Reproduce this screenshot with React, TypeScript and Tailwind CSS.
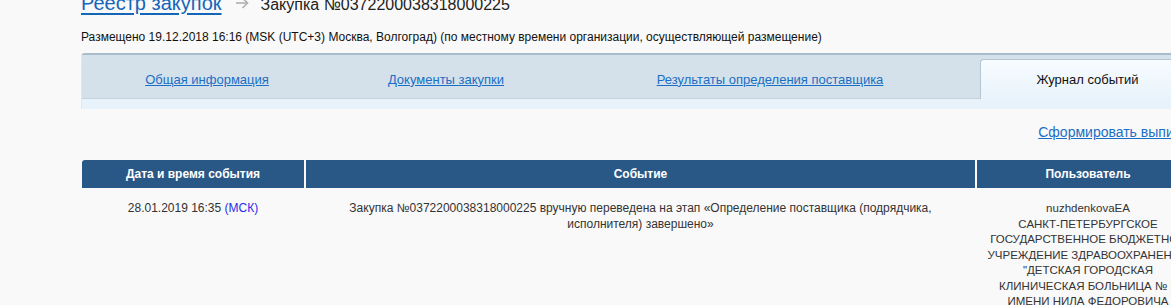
import React from "react";

const userLines = [
  "nuzhdenkovaEA",
  "САНКТ-ПЕТЕРБУРГСКОЕ",
  "ГОСУДАРСТВЕННОЕ БЮДЖЕТНОЕ",
  "УЧРЕЖДЕНИЕ ЗДРАВООХРАНЕНИЯ",
  "\"ДЕТСКАЯ ГОРОДСКАЯ",
  "КЛИНИЧЕСКАЯ БОЛЬНИЦА № 5",
  "ИМЕНИ НИЛА ФЕДОРОВИЧА",
  "ФИЛАТОВА\"",
];

export default function App() {
  return (
    <div className="w-[1171px] h-[305px] overflow-hidden bg-[#f9f9f9] text-[#333] font-['Liberation_Sans',Arial,sans-serif]">
      <div className="w-[1120px] ml-[81px]">
        {/* breadcrumb */}
        <div className="flex items-baseline h-[20px] -mt-[7px] leading-[20px] whitespace-nowrap">
          <a href="#" className="text-[20px] text-[#1466b8] underline underline-offset-[3px]">Реестр закупок</a>
          <svg width="14" height="12" viewBox="0 0 14 12" className="ml-[13px] mr-[12px] self-start mt-[4px]" fill="none" stroke="#b0b0b0" strokeWidth="1.6">
            <path d="M1 6 H12.5" />
            <path d="M7.5 1 L12.5 6 L7.5 11" />
          </svg>
          <span className="text-[16px] text-[#222]">Закупка №0372200038318000225</span>
        </div>
        <div className="mt-[17px] text-[12px] leading-[14px] text-[#111] whitespace-nowrap">
          Размещено 19.12.2018 16:16 (MSK (UTC+3) Москва, Волгоград) (по местному времени организации, осуществляющей размещение)
        </div>

        {/* tabs */}
        <div className="mt-[9px] rounded-tl-[4px] border-t-2 border-l border-t-[#a9bccb] border-l-[#dfe8ef] overflow-hidden">
          <div className="flex h-[44px] items-end bg-[#d5e1ea] border-b border-[#c4d3de]">
            <div className="w-[250px] h-full pt-[6px] flex items-center justify-center">
              <a href="#" className="text-[13px] text-[#1a6fc4] underline">Общая информация</a>
            </div>
            <div className="w-[228px] h-full pt-[6px] flex items-center justify-center">
              <a href="#" className="text-[13px] text-[#1a6fc4] underline">Документы закупки</a>
            </div>
            <div className="w-[420px] h-full pt-[6px] flex items-center justify-center">
              <a href="#" className="text-[13px] text-[#1a6fc4] underline">Результаты определения поставщика</a>
            </div>
            <div className="w-[214px] h-[40px] -mb-px flex items-center justify-center rounded-tl-[4px] border-t border-l border-[#b4c6d4] bg-gradient-to-b from-[#f8fcff] to-[#e8f3fb]">
              <span className="text-[13px] text-[#111]">Журнал событий</span>
            </div>
          </div>
          <div className="h-[10px] bg-[#e7f2fa]" />
        </div>

        {/* link */}
        <div className="flex justify-end mt-[15px] mr-[7px]">
          <a href="#" className="text-[14px] leading-[16px] text-[#1a6fc4] underline whitespace-nowrap">Сформировать выписку</a>
        </div>

        {/* table */}
        <div className="mt-[20px] ml-px flex gap-[2px] h-[28px] text-white text-[12px] font-bold">
          <div className="w-[222px] shrink-0 bg-[#295886] rounded-tl-[3px] flex items-center justify-center">Дата и время события</div>
          <div className="w-[669px] shrink-0 bg-[#295886] flex items-center justify-center">Событие</div>
          <div className="w-[222px] shrink-0 bg-[#295886] flex items-center justify-center">Пользователь</div>
        </div>
        <div className="ml-px flex gap-[2px] text-[12px] leading-[15.5px] text-[#333] pt-[13px]">
          <div className="w-[222px] shrink-0 text-center">
            28.01.2019 16:35 <span className="text-[#2b2bf0]">(МСК)</span>
          </div>
          <div className="w-[669px] shrink-0 text-center">
            Закупка №0372200038318000225 вручную переведена на этап «Определение поставщика (подрядчика,
            <br />
            исполнителя) завершено»
          </div>
          <div className="w-[222px] shrink-0 text-center text-[11.5px]">
            {userLines.map((l) => (
              <div key={l} className="whitespace-nowrap">{l}</div>
            ))}
          </div>
        </div>
      </div>
    </div>
  );
}
